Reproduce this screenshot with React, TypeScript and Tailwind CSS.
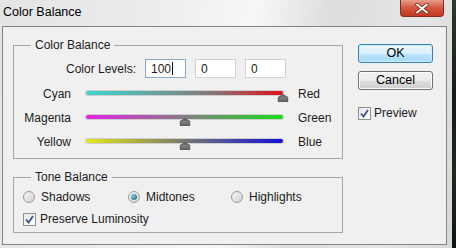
import React from 'react';

const sliders = [
  { left: 'Cyan', right: 'Red', value: 100, track: 'bg-[linear-gradient(to_right,#3fd6cf,#6f9593_45%,#8a7476_65%,#e0101c)]' },
  { left: 'Magenta', right: 'Green', value: 0, track: 'bg-[linear-gradient(to_right,#e522e5,#9a6a9a_40%,#6a946a_62%,#18dc18)]' },
  { left: 'Yellow', right: 'Blue', value: 0, track: 'bg-[linear-gradient(to_right,#e6e61c,#8d8d5a_40%,#5f5f8d_62%,#1010d8)]' },
];

function Thumb() {
  return (
    <svg width="11" height="8" viewBox="0 0 11 8">
      <path d="M5.5 0.5 L10.5 3.5 V7.5 H0.5 V3.5 Z" fill="#6e6e6e" stroke="#5a5a5a" />
      <path d="M2 4 H9" stroke="#8d8d8d" />
    </svg>
  );
}

function Slider({ value, track }: { value: number; track: string }) {
  const pct = (value + 100) / 2;
  return (
    <div className="relative self-start mt-[9px] w-[197px] h-[4px]">
      <div className={`h-[4px] rounded-full ${track} shadow-[0_0_0_1px_rgba(130,130,130,0.3)]`} />
      <div className="absolute top-[3px] -translate-x-1/2" style={{ left: `${pct}%` }}>
        <Thumb />
      </div>
    </div>
  );
}

function Radio({ checked }: { checked?: boolean }) {
  return (
    <div className="w-[12px] h-[12px] rounded-full border border-[#9a9a9a] bg-[linear-gradient(135deg,#f4f4f4,#d6d6d6)] flex items-center justify-center">
      {checked && <div className="w-[6px] h-[6px] rounded-full bg-[radial-gradient(circle_at_35%_35%,#7fc6dc,#1d5870)]" />}
    </div>
  );
}

function Check() {
  return (
    <div className="w-[13px] h-[13px] border border-[#8e8f8f] bg-[linear-gradient(135deg,#e8e8e8,#ffffff)] flex items-center justify-center">
      <svg width="9" height="9" viewBox="0 0 9 9">
        <path d="M1 4.5 L3.5 7.5 L8 1" fill="none" stroke="#3b4f8c" strokeWidth="1.8" />
      </svg>
    </div>
  );
}

export default function App() {
  return (
    <div className="flex w-[456px] h-[248px] overflow-hidden text-[12px] leading-[14px] text-[#1c1c1c] font-['Liberation_Sans',Arial,sans-serif]">
      <div className="w-[452px] flex flex-col bg-[linear-gradient(100deg,#e4e4e4_0%,#ececec_30%,#f7f7f7_52%,#dcdcdc_68%,#e6e6e6_85%,#d8d8d8_100%)]">
        {/* title bar */}
        <div className="h-[26px] flex justify-between">
          <div className="pl-[3px] pt-[5px] text-[12.5px] text-black">Color Balance</div>
          <div className="mr-[8px] w-[44px] h-[17px] rounded-b-[4px] border border-t-0 border-[#8a2a1a] bg-[linear-gradient(to_bottom,#e9a08c,#d4553b_50%,#c23a20)] flex items-center justify-center">
            <svg width="14" height="11" viewBox="0 0 14 11">
              <path d="M2 1.5 L12 9.5 M12 1.5 L2 9.5" stroke="#5a1a10" strokeWidth="3.4" strokeLinecap="round" />
              <path d="M2 1.5 L12 9.5 M12 1.5 L2 9.5" stroke="#ffffff" strokeWidth="2" strokeLinecap="round" />
            </svg>
          </div>
        </div>

        {/* body */}
        <div className="ml-[2px] w-[445px] h-[219px] border border-[#838383] bg-[#f0f0f0] flex pl-[10px] pt-[11px]">
          <div className="flex flex-col">
            <fieldset className="w-[330px] border border-[#a6a6a6]">
              <legend className="ml-[17px] px-[4px]">Color Balance</legend>
              <div className="pt-[7px] pb-[4px]">
                <div className="flex items-center h-[19px]">
                  <div className="w-[122px] text-right">Color Levels:</div>
                  <div className="ml-[9px] flex gap-[9px]">
                    <div className="w-[41px] h-[19px] border border-[#8aa7cf] bg-white flex items-center pl-[5px]">
                      100<span className="ml-[1px] w-px h-[13px] bg-black" />
                    </div>
                    <div className="w-[41px] h-[19px] border border-[#d2d2d2] bg-white flex items-center pl-[5px]">0</div>
                    <div className="w-[41px] h-[19px] border border-[#d2d2d2] bg-white flex items-center pl-[5px]">0</div>
                  </div>
                </div>
                <div className="mt-[4px]">
                  {sliders.map((s) => (
                    <div key={s.left} className="flex items-center h-[24px]">
                      <div className="w-[57px] text-right">{s.left}</div>
                      <div className="ml-[15px] flex h-[24px]">
                        <Slider value={s.value} track={s.track} />
                      </div>
                      <div className="ml-[15px]">{s.right}</div>
                    </div>
                  ))}
                </div>
              </div>
            </fieldset>

            <fieldset className="mt-[11px] w-[330px] border border-[#a6a6a6]">
              <legend className="ml-[17px] px-[4px]">Tone Balance</legend>
              <div className="pt-[3px] pb-[3px] pl-[9px]">
                <div className="flex items-center h-[20px]">
                  <div className="w-[105px] flex items-center gap-[6px]"><Radio />Shadows</div>
                  <div className="w-[103px] flex items-center gap-[6px]"><Radio checked />Midtones</div>
                  <div className="flex items-center gap-[6px]"><Radio />Highlights</div>
                </div>
                <div className="mt-[2px] flex items-center h-[20px] gap-[4px]">
                  <Check />Preserve Luminosity
                </div>
              </div>
            </fieldset>
          </div>

          <div className="ml-[15px] pt-[6px] flex flex-col">
            <button className="w-[75px] h-[19px] rounded-[3px] border border-[#3c7fb1] bg-[linear-gradient(to_bottom,#eaf6fd,#d9f0fc_50%,#bee6fd_51%,#a7d9f5)] shadow-[inset_0_0_0_1px_#c9ecff] text-[12.5px] leading-[17px] text-black">
              OK
            </button>
            <button className="mt-[8px] w-[75px] h-[19px] rounded-[3px] border border-[#707070] bg-[linear-gradient(to_bottom,#f2f2f2,#ebebeb_50%,#dddddd_51%,#cfcfcf)] shadow-[inset_0_0_0_1px_#fbfbfb] text-[12.5px] leading-[17px] text-black">
              Cancel
            </button>
            <div className="mt-[13px] flex items-center h-[20px] gap-[3px]">
              <Check />
              <span>Preview</span>
            </div>
          </div>
        </div>
      </div>
      <div className="flex-1 bg-[linear-gradient(to_bottom,#2a3a30,#141a16_40%,#1c2a22_70%,#101410)]" />
    </div>
  );
}
